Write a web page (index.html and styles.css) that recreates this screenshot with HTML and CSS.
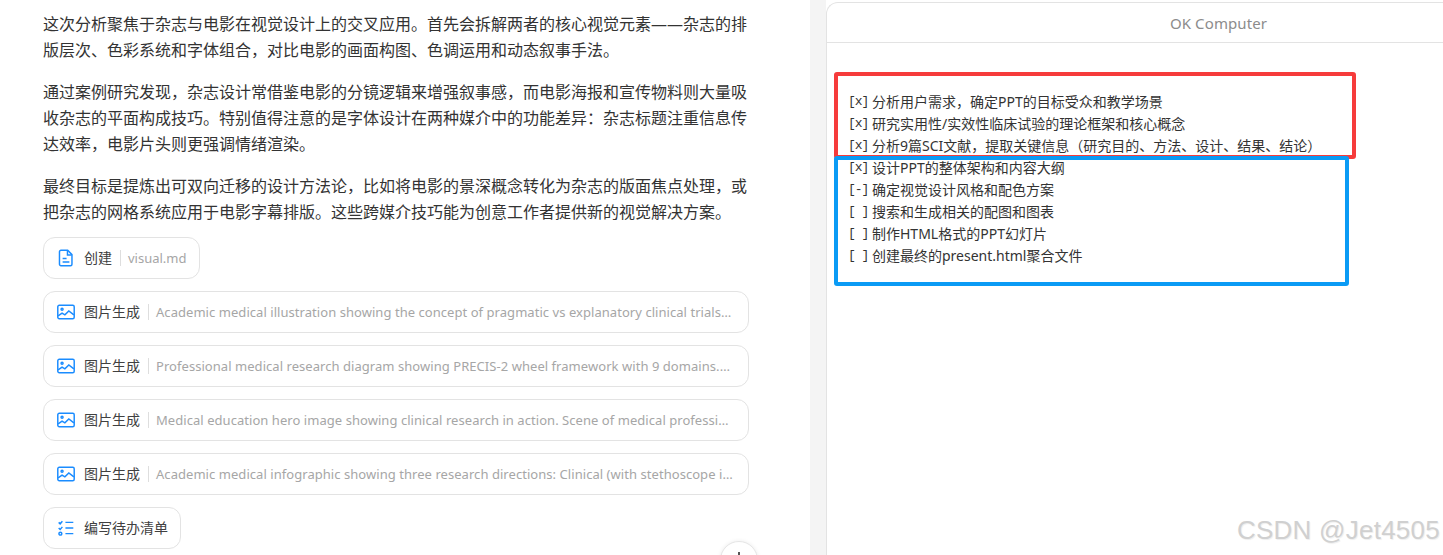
FILE: index.html
```html
<!DOCTYPE html>
<html lang="zh-CN">
<head>
    <meta charset="UTF-8">
    <meta name="viewport" content="width=device-width, initial-scale=1.0">
    <title>OK Computer</title>
    <link rel="stylesheet" href="styles.css">
</head>
<body>
    <div class="page">
        <div class="chat">
            <p>这次分析聚焦于杂志与电影在视觉设计上的交叉应用。首先会拆解两者的核心视觉元素——杂志的排版层次、色彩系统和字体组合，对比电影的画面构图、色调运用和动态叙事手法。</p>
            <p>通过案例研究发现，杂志设计常借鉴电影的分镜逻辑来增强叙事感，而电影海报和宣传物料则大量吸收杂志的平面构成技巧。特别值得注意的是字体设计在两种媒介中的功能差异：杂志标题注重信息传达效率，电影片头则更强调情绪渲染。</p>
            <p>最终目标是提炼出可双向迁移的设计方法论，比如将电影的景深概念转化为杂志的版面焦点处理，或把杂志的网格系统应用于电影字幕排版。这些跨媒介技巧能为创意工作者提供新的视觉解决方案。</p>

            <div class="tools">
                <div class="tool">
                    <svg class="icon" viewBox="0 0 16 16"><path d="M3.500 1.200h6l3.800 3.800v8.500a1.300 1.300 0 0 1-1.300 1.300H3.500a1.300 1.300 0 0 1-1.300-1.300V2.500a1.300 1.300 0 0 1 1.300-1.300z"/><path d="M9.300 1.500v3.800h3.800M5 8.500h3.500M5 11.500h6"/></svg>
                    <span class="tool-name">创建</span>
                    <span class="tool-desc">visual.md</span>
                </div>
                <div class="tool wide">
                    <svg class="icon" viewBox="0 0 16 16"><rect x="0.700" y="2" width="14.600" height="12" rx="1.300"/><circle cx="4.500" cy="5.500" r="0.900"/><path d="M1 11.500l3.500-2.500 2.500 1.500 3.500-3.500 4.500 3.500"/></svg>
                    <span class="tool-name">图片生成</span>
                    <span class="tool-desc">Academic medical illustration showing the concept of pragmatic vs explanatory clinical trials with visual comparison</span>
                </div>
                <div class="tool wide">
                    <svg class="icon" viewBox="0 0 16 16"><rect x="0.700" y="2" width="14.600" height="12" rx="1.300"/><circle cx="4.500" cy="5.500" r="0.900"/><path d="M1 11.500l3.500-2.500 2.500 1.500 3.500-3.500 4.500 3.500"/></svg>
                    <span class="tool-name">图片生成</span>
                    <span class="tool-desc">Professional medical research diagram showing PRECIS-2 wheel framework with 9 domains. Clean academic style</span>
                </div>
                <div class="tool wide">
                    <svg class="icon" viewBox="0 0 16 16"><rect x="0.700" y="2" width="14.600" height="12" rx="1.300"/><circle cx="4.500" cy="5.500" r="0.900"/><path d="M1 11.500l3.500-2.500 2.500 1.500 3.500-3.500 4.500 3.500"/></svg>
                    <span class="tool-name">图片生成</span>
                    <span class="tool-desc">Medical education hero image showing clinical research in action. Scene of medical professionals reviewing data</span>
                </div>
                <div class="tool wide">
                    <svg class="icon" viewBox="0 0 16 16"><rect x="0.700" y="2" width="14.600" height="12" rx="1.300"/><circle cx="4.500" cy="5.500" r="0.900"/><path d="M1 11.500l3.500-2.500 2.500 1.500 3.500-3.500 4.500 3.500"/></svg>
                    <span class="tool-name">图片生成</span>
                    <span class="tool-desc">Academic medical infographic showing three research directions: Clinical (with stethoscope icon), Translational</span>
                </div>
                <div class="tool">
                    <svg class="icon" viewBox="0 0 16 16"><path d="M1.500 3l1.300 1.300 2-2.300M1.500 8l1.300 1.300 2-2.300M7.500 3h7M7.500 8h7M7.500 13h7"/><circle cx="3" cy="13" r="1.300"/></svg>
                    <span class="tool-name">编写待办清单</span>
                </div>
            </div>
            <div class="scroll-btn"><span class="scroll-dot"></span></div>
        </div>

        <div class="gutter"></div>

        <div class="panel">
            <div class="panel-head">OK Computer</div>
            <ul class="todo">
                <li><span class="mark">[x]</span>分析用户需求，确定PPT的目标受众和教学场景</li>
                <li><span class="mark">[x]</span>研究实用性/实效性临床试验的理论框架和核心概念</li>
                <li><span class="mark">[x]</span>分析9篇SCI文献，提取关键信息（研究目的、方法、设计、结果、结论）</li>
                <li><span class="mark">[x]</span>设计PPT的整体架构和内容大纲</li>
                <li><span class="mark">[-]</span>确定视觉设计风格和配色方案</li>
                <li><span class="mark">[ ]</span>搜索和生成相关的配图和图表</li>
                <li><span class="mark">[ ]</span>制作HTML格式的PPT幻灯片</li>
                <li><span class="mark">[ ]</span>创建最终的present.html聚合文件</li>
            </ul>
            <!-- 标注框 -->
            <div class="box-red"></div>
            <div class="box-blue"></div>
        </div>

        <div class="watermark">CSDN @Jet4505</div>
    </div>
</body>
</html>
```

FILE: styles.css
```css
* {
    box-sizing: border-box;
}

html, body {
    margin: 0;
    height: 555px;
    overflow: hidden;
    background: #ffffff;
}

body {
    font-family: "Noto Sans", "Noto Sans CJK SC", sans-serif;
    color: #333;
}

.page {
    position: relative;
    display: flex;
    height: 555px;
    overflow: hidden;
}

.chat {
    position: relative;
    width: 810px;
    flex-shrink: 0;
    padding: 11px 61px 0 43px;
}

.chat p {
    margin: 0 0 16px;
    padding-right: 1px;
    font-size: 16px;
    line-height: 26px;
}

.chat p:last-of-type {
    margin-bottom: 12px;
}

.tools {
    display: flex;
    flex-direction: column;
    align-items: flex-start;
    gap: 12px;
}

.tool {
    display: flex;
    align-items: center;
    height: 42px;
    padding: 0 12px 0 13px;
    border: 1px solid #e3e3e3;
    border-radius: 12px;
    background: #fff;
    max-width: 100%;
}

.tool.wide {
    width: 100%;
    padding-right: 15px;
}

.icon {
    width: 18px;
    height: 18px;
    flex-shrink: 0;
    margin-right: 9px;
    fill: none;
    stroke: #1a8cff;
    stroke-width: 1.300;
}

.tool-name {
    font-size: 14px;
    line-height: 16px;
    color: #404040;
    white-space: nowrap;
    flex-shrink: 0;
}

.tool-desc {
    margin-left: 8px;
    padding-left: 7px;
    border-left: 1px solid #dedede;
    font-size: 13px;
    line-height: 16px;
    color: #a6a6a6;
    white-space: nowrap;
    overflow: hidden;
    text-overflow: ellipsis;
}

.wide .tool-desc {
    letter-spacing: 0.05px;
}

.scroll-btn {
    position: absolute;
    left: 720px;
    top: 541px;
    width: 38px;
    height: 38px;
    border: 1px solid #e6e6e6;
    border-radius: 50%;
    background: #fff;
    box-shadow: 0 0 4px rgba(0, 0, 0, 0.08);
}

.scroll-dot {
    display: block;
    width: 2px;
    height: 8px;
    margin: 10px auto 0;
    background: #555;
}

.gutter {
    width: 16px;
    flex-shrink: 0;
    background: #f4f4f4;
}

.panel {
    position: relative;
    flex: none;
    width: 784px;
    margin-top: 2px;
    border-top: 1px solid #e3e3e3;
    border-left: 1px solid #e3e3e3;
    border-top-left-radius: 12px;
    background: #fff;
}

.panel-head {
    height: 40px;
    line-height: 41px;
    text-align: center;
    font-size: 15px;
    letter-spacing: 0.1px;
    color: #8c8c8c;
    border-bottom: 1px solid #e3e3e3;
}

.todo {
    list-style: none;
    margin: 47px 0 0;
    padding: 0 0 0 21px;
    font-size: 14px;
    color: #333;
}

.todo li {
    display: flex;
    align-items: center;
    height: 22px;
    white-space: nowrap;
}

.mark {
    flex: none;
    width: 24px;
    font-family: "Liberation Mono", monospace;
    font-size: 13px;
    letter-spacing: -1px;
    white-space: pre;
}

.box-red {
    position: absolute;
    left: 7px;
    top: 69px;
    width: 522px;
    height: 87px;
    border: 4px solid #f63b3b;
    border-radius: 3px;
}

.box-blue {
    position: absolute;
    left: 7px;
    top: 153px;
    width: 515px;
    height: 130px;
    border: 4px solid #0a9bf5;
    border-radius: 3px;
}

.watermark {
    position: absolute;
    right: 3px;
    bottom: 9px;
    font-family: "Liberation Sans", sans-serif;
    font-size: 26px;
    letter-spacing: 0.25px;
    color: #d0d0d0;
    text-shadow: 1px 1px 1px #eeeeee;
}
```
